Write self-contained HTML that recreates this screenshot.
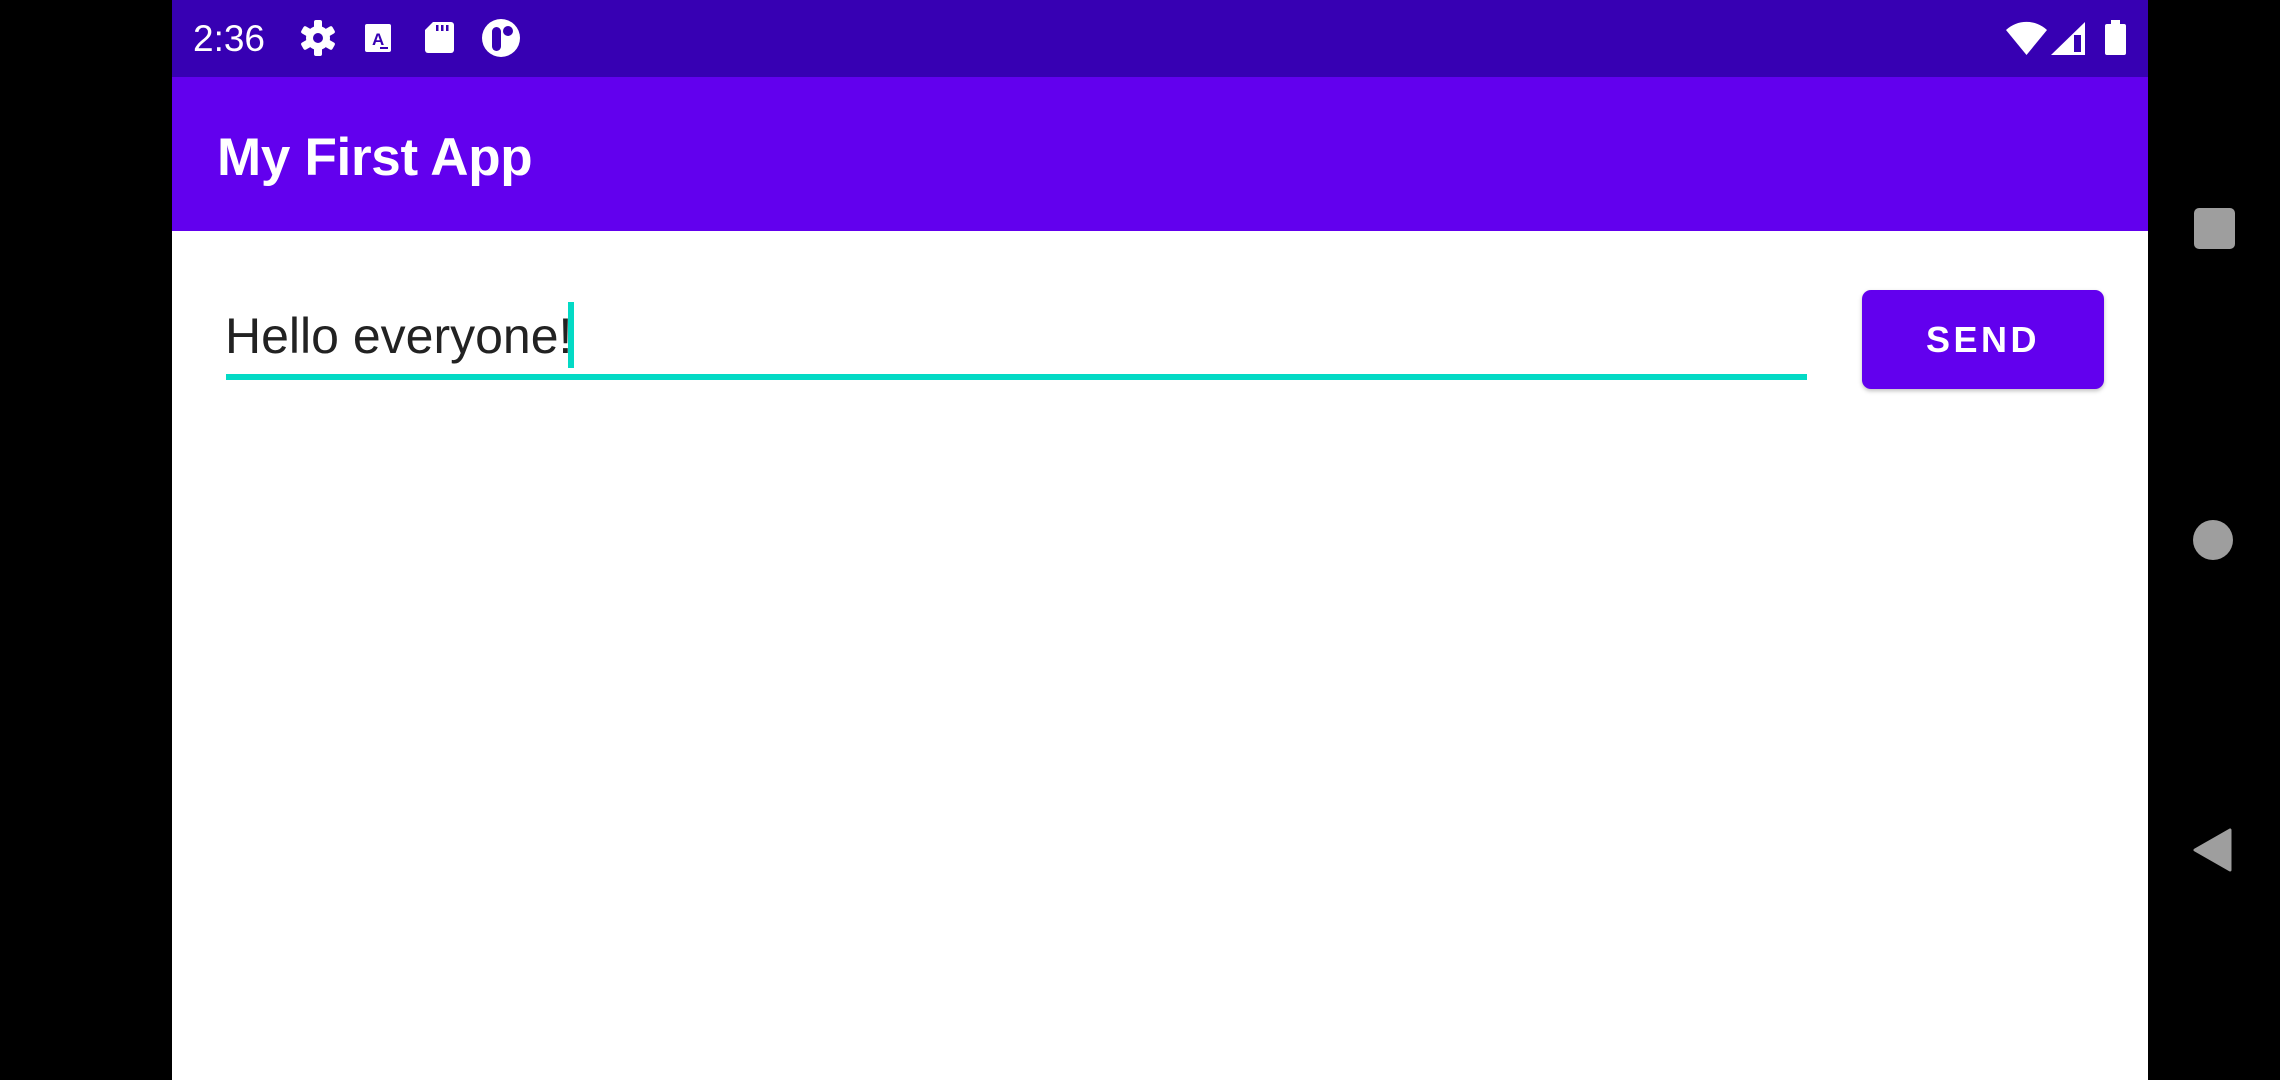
<!DOCTYPE html>
<html><head><style>
body{margin:0;width:2280px;height:1080px;background:#000;position:relative;overflow:hidden;font-family:"Liberation Sans",sans-serif}
.abs{position:absolute}
</style></head><body>
<div class="abs" style="left:172px;top:0;width:1976px;height:77px;background:#3700b3"></div>
<div class="abs" style="left:172px;top:77px;width:1976px;height:154px;background:#6200ee"></div>
<div class="abs" style="left:172px;top:231px;width:1976px;height:849px;background:#fff"></div>
<div class="abs" style="left:193px;top:15px;font-size:37px;color:#fff;line-height:48px">2:36</div>
<svg class="abs" style="left:0;top:0" width="2280" height="80">
<g fill="#fff">
<circle cx="318" cy="38" r="12"/>
<g transform="translate(318 38)">
<rect x="-4" y="-18" width="8" height="36" rx="2"/>
<rect x="-4" y="-18" width="8" height="36" rx="2" transform="rotate(60)"/>
<rect x="-4" y="-18" width="8" height="36" rx="2" transform="rotate(120)"/>
</g>
</g>
<circle cx="318" cy="38" r="5" fill="#3700b3"/>
<rect x="365" y="24" width="26" height="28" rx="2" fill="#fff"/>
<text x="372" y="45" font-family="Liberation Sans" font-weight="bold" font-size="17" fill="#3700b3">A</text>
<rect x="380" y="47" width="8" height="2" fill="#3700b3"/>
<path d="M433 22h18a3 3 0 0 1 3 3v25a3 3 0 0 1-3 3h-23a3 3 0 0 1-3-3v-20z" fill="#fff"/>
<rect x="436" y="25" width="2.5" height="6" fill="#3700b3"/><rect x="441" y="25" width="2.5" height="6" fill="#3700b3"/><rect x="446" y="25" width="2.5" height="6" fill="#3700b3"/>
<circle cx="501" cy="38" r="19" fill="#fff"/>
<rect x="492" y="27" width="9" height="24" rx="4.5" fill="#3700b3"/>
<circle cx="508" cy="31" r="5" fill="#3700b3"/>
<path d="M2006 30 A30 30 0 0 1 2047 30 L2026.5 55z" fill="#fff"/>
<path d="M2051 55 L2085 22 L2085 55z" fill="#fff"/>
<rect x="2074" y="35" width="7" height="17" fill="#3700b3"/>
<rect x="2111" y="20" width="9" height="5" fill="#fff"/>
<rect x="2105" y="24" width="21" height="31" rx="2" fill="#fff"/>
</svg>
<div class="abs" style="left:217px;top:123px;font-size:53px;color:#fff;font-weight:bold;line-height:70px;letter-spacing:-0.3px">My First App</div>
<div class="abs" style="left:225px;top:304px;font-size:50px;color:#222;line-height:64px">Hello everyone!</div>
<div class="abs" style="left:568px;top:302px;width:6px;height:66px;background:#03dac5"></div>
<div class="abs" style="left:226px;top:374px;width:1581px;height:6px;background:#03dac5"></div>
<div class="abs" style="left:1862px;top:290px;width:242px;height:99px;background:#6200ee;border-radius:9px;box-shadow:0 2px 4px rgba(0,0,0,0.25);color:#fff;font-size:36px;line-height:99px;text-align:center;letter-spacing:3.5px;font-weight:bold">SEND</div>
<div class="abs" style="left:2194px;top:208px;width:41px;height:41px;background:#9e9e9e;border-radius:5px"></div>
<div class="abs" style="left:2193px;top:520px;width:40px;height:40px;background:#9e9e9e;border-radius:50%"></div>
<svg class="abs" style="left:2185px;top:820px" width="60" height="60"><path d="M10 30 L45 10 L45 50z" fill="#9e9e9e" stroke="#9e9e9e" stroke-width="3" stroke-linejoin="round"/></svg>
</body></html>
